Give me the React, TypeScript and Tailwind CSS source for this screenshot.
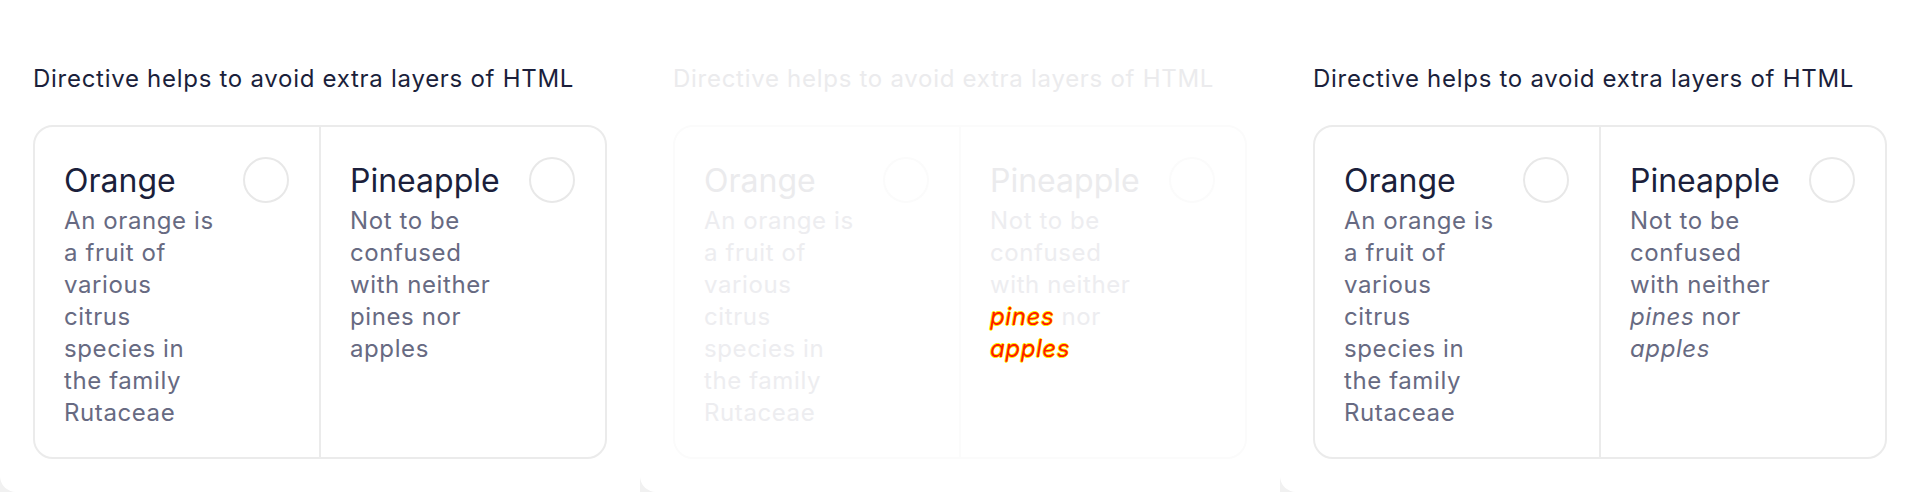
import React from 'react';

type Variant = 'plain' | 'diff' | 'italic';

const font = { fontFamily: 'Inter, "Noto Sans", sans-serif' };

function Emph({ variant, children }: { variant: Variant; children: React.ReactNode }) {
  if (variant === 'plain') return <>{children}</>;
  if (variant === 'italic') return <em>{children}</em>;
  // diff highlight stays at full strength on top of the faded panel
  return (
    <em className="text-[#ff1a00] [text-shadow:0.7px_0_0_#ffee00,-0.7px_0_0_#ffee00,0_0.7px_0_#ffee00,0_-0.7px_0_#ffee00]">
      {children}
    </em>
  );
}

function Panel({ variant }: { variant: Variant }) {
  const faded = variant === 'diff';
  const line = faded ? 'border-[#fbfbfb]' : 'border-[#ebebeb]';
  const title = faded ? 'text-[#ebebed]' : 'text-[#1b1f3b]';
  const body = faded ? 'text-[#ededf0]' : 'text-[#676a82]';
  const ring = faded ? 'border-[#fbfbfb]' : 'border-[#e8e8e8]';

  return (
    <div className="h-[492px] w-[640px] shrink-0 rounded-bl-2xl bg-white pl-[33px] pt-[63px]">
      <p className={`text-[24px] leading-[32px] tracking-[0.03em] ${title}`}>
        Directive helps to avoid extra layers of HTML
      </p>
      <div className={`mt-[30px] flex w-[574px] rounded-[20px] border-2 ${line}`}>
        <div className="flex flex-1 justify-between pl-[29px] pr-[30px] pt-[30px] pb-[28px]">
          <div className="w-[155px]">
            <div className={`text-[32px] leading-[48px] ${title}`}>Orange</div>
            <div className={`text-[24px] leading-[32px] tracking-[0.025em] ${body}`}>
              An orange is a fruit of various citrus species in the family Rutaceae
            </div>
          </div>
          <div className={`h-[46px] w-[46px] shrink-0 rounded-full border-2 ${ring}`} />
        </div>
        <div className={`flex flex-1 justify-between border-l-2 pl-[29px] pr-[30px] pt-[30px] pb-[28px] ${line}`}>
          <div className="w-[155px]">
            <div className={`text-[32px] leading-[48px] ${title}`}>Pineapple</div>
            <div className={`text-[24px] leading-[32px] tracking-[0.025em] ${body}`}>
              Not to be confused with neither <Emph variant={variant}>pines</Emph> nor{' '}
              <Emph variant={variant}>apples</Emph>
            </div>
          </div>
          <div className={`h-[46px] w-[46px] shrink-0 rounded-full border-2 ${ring}`} />
        </div>
      </div>
    </div>
  );
}

export default function App() {
  return (
    <div className="flex h-[492px] w-[1920px] overflow-hidden bg-[#f1f1f1]" style={font}>
      <Panel variant="plain" />
      <Panel variant="diff" />
      <Panel variant="italic" />
    </div>
  );
}
